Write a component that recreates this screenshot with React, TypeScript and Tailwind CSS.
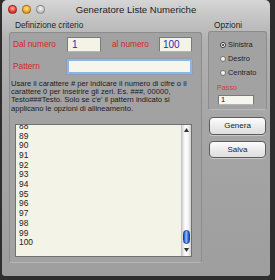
import React from 'react';

const nums = [88, 89, 90, 91, 92, 93, 94, 95, 96, 97, 98, 99, 100];

function Light({ color }: { color: string }) {
  return <span className={`block w-[9px] h-[9px] rounded-full border border-black/30 ${color}`} />;
}

function Radio({ checked, label }: { checked?: boolean; label: string }) {
  return (
    <div className="h-[14px] flex items-center gap-[2px]">
      <span
        className={
          checked
            ? 'w-[6px] h-[6px] rounded-full border border-[#333] bg-white flex items-center justify-center'
            : 'w-[6px] h-[6px] rounded-full border border-[#777] bg-[linear-gradient(#ffffff,#e4e4e4)]'
        }
      >
        {checked && <span className="w-[2px] h-[2px] rounded-full bg-[#222]" />}
      </span>
      <span className="text-[7.4px] text-[#222]">{label}</span>
    </div>
  );
}

export default function App() {
  return (
    <div
      className="w-[275px] h-[280px] bg-[#2e2e2e] overflow-hidden"
      style={{ fontFamily: '"Liberation Sans", Arial, sans-serif' }}
    >
      <div className="ml-[2px] w-[268px] h-[276px] rounded-t-[5px] rounded-b-[3px] bg-[linear-gradient(180deg,#d6d6d6_0px,#c4c4c4_18px,#b2b2b2_40px,#a6a6a6_120px,#9e9e9e_276px)] flex flex-col overflow-hidden">
        {/* title bar */}
        <div className="h-[19px] grid grid-cols-[56px_1fr_56px] items-center">
          <div className="flex items-center gap-[5px] pl-[6px]">
            <Light color="bg-[radial-gradient(circle_at_50%_35%,#ffb0a0,#e23b2c_60%,#a52418)]" />
            <Light color="bg-[radial-gradient(circle_at_50%_35%,#ffe6a0,#f0a423_60%,#b7740f)]" />
            <Light color="bg-[radial-gradient(circle_at_50%_35%,#f4f4f4,#c8c8c8_60%,#9a9a9a)]" />
          </div>
          <div className="text-center text-[9.6px] text-[#222] leading-none">Generatore Liste Numeriche</div>
          <div />
        </div>

        <div className="flex pl-[7px] pr-[3px] gap-[6px]">
          {/* left column */}
          <div className="w-[193px]">
            <div className="h-[13px] leading-[13px] pl-[6px] text-[8.3px] text-[#1e1e1e]">Definizione criterio</div>
            <div className="h-[231px] rounded-[3px] border border-[#8c8c8c] border-b-[#b8b8b8] bg-[#a2a2a2] pl-[3px] pr-[9px] pt-[4px]">
              <div className="h-[15px] flex items-center">
                <span className="w-[54px] text-[8.3px] text-[#d3262a]">Dal numero</span>
                <div className="w-[34px] h-[15px] bg-[#f4f4e6] border border-[#7a7a7a] border-b-[#b5b5b5] flex items-center pl-[4px] text-[10px] text-[#2a2ab8]">1</div>
                <span className="ml-[11px] w-[47px] text-[8.3px] text-[#d3262a]">al numero</span>
                <div className="w-[33px] h-[15px] bg-[#f4f4e6] border border-[#7a7a7a] border-b-[#b5b5b5] flex items-center pl-[3px] text-[10px] text-[#2a2ab8]">100</div>
              </div>
              <div className="mt-[7px] h-[15px] flex items-center">
                <span className="w-[54px] text-[8.3px] text-[#d3262a]">Pattern</span>
                <div className="flex-1 h-[15px] bg-[#f6f6ec] border-2 border-[#8db4e8] shadow-[0_0_1px_#4f86d6]" />
              </div>
              <div className="mt-[6px] -ml-[2px] text-[7.6px] leading-[8.2px] text-[#1a1a1a] whitespace-nowrap">
                <div>Usare il carattere # per indicare il numero di cifre o il</div>
                <div>carattere 0 per inseirire gli zeri. Es. ###, 00000,</div>
                <div>Testo###Testo. Solo se c'e' il pattern indicato si</div>
                <div>applicano le opzioni di allineamento.</div>
              </div>
              <div className="mt-[11px] ml-[2px] w-[177px] h-[133px] flex border border-[#707070] bg-[#f3f3e8] overflow-hidden">
                <div className="flex-1 overflow-hidden pl-[3px]">
                  <div className="-mt-[3px] text-[8.4px] leading-[9.7px] text-[#222]">
                    {nums.map((n) => (
                      <div key={n}>{n}</div>
                    ))}
                  </div>
                </div>
                <div className="w-[10px] flex flex-col bg-[linear-gradient(90deg,#d6d6d6,#ffffff_40%,#f2f2f2_70%,#cfcfcf)] border-l border-[#c4c4c4]">
                  <div className="h-[11px] flex items-center justify-center">
                    <svg width="5" height="4" viewBox="0 0 5 4"><polygon points="2.5,0 5,4 0,4" fill="#333" /></svg>
                  </div>
                  <div className="flex-1 flex flex-col justify-end pb-[1px]">
                    <div className="mx-[1px] h-[14px] rounded-full bg-[linear-gradient(90deg,#1f4fc4,#8cbcff_45%,#3a72e4_80%,#1b48b8)] border border-[#1d3f96]" />
                  </div>
                  <div className="h-[11px] flex items-center justify-center">
                    <svg width="5" height="4" viewBox="0 0 5 4"><polygon points="0,0 5,0 2.5,4" fill="#333" /></svg>
                  </div>
                </div>
              </div>
            </div>
          </div>

          {/* right column */}
          <div className="w-[59px]">
            <div className="h-[12px] leading-[12px] pl-[6px] text-[8.3px] text-[#1e1e1e]">Opzioni</div>
            <div className="h-[79px] rounded-[3px] border border-[#8c8c8c] border-b-[#b8b8b8] bg-[#a2a2a2] pl-[11px] pt-[6px]">
              <Radio checked label="Sinistra" />
              <Radio label="Destro" />
              <Radio label="Centrato" />
              <div className="mt-[3px] -ml-[3px] h-[10px] leading-[10px] text-[7.2px] text-[#e03434]">Passo</div>
              <div className="mt-[2px] -ml-[2px] w-[36px] h-[10px] bg-[#f6f6ee] border border-[#7a7a7a] border-b-[#b5b5b5] flex items-center pl-[2px] text-[7.5px] text-[#111]">1</div>
            </div>
            <button className="mt-[7px] ml-[1px] w-[57px] h-[18px] rounded-[4px] border border-[#5c5c5c] bg-[linear-gradient(#fdfdfd,#ececec_50%,#dedede)] text-[8px] text-[#1a1a1a] flex items-center justify-center shadow-[0_1px_0_#c8c8c8]">
              Genera
            </button>
            <button className="mt-[6px] ml-[1px] w-[57px] h-[17px] rounded-[4px] border border-[#5c5c5c] bg-[linear-gradient(#fdfdfd,#ececec_50%,#dedede)] text-[8px] text-[#1a1a1a] flex items-center justify-center shadow-[0_1px_0_#c8c8c8]">
              Salva
            </button>
          </div>
        </div>
      </div>
    </div>
  );
}
